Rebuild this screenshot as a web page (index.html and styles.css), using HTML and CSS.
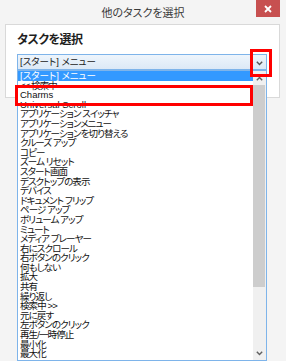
FILE: index.html
```html
<!DOCTYPE html>
<html lang="ja">
<head>
<meta charset="utf-8">
<link rel="stylesheet" href="styles.css">
</head>
<body>
<div class="window">
  <div class="titlebar">
    <span></span>
    <div class="title">他のタスクを選択</div>
    <div class="close">
      <svg width="8" height="8" viewBox="0 0 8 8"><path d="M1 1L7 7M7 1L1 7" stroke="#fff" stroke-width="1.8" fill="none"/></svg>
    </div>
  </div>
  <div class="panel">
    <div class="heading">タスクを選択</div>
    <div class="combo">
      <span class="combo-text">[スタート] メニュー</span>
      <span class="combo-arrow"><svg width="7" height="5" viewBox="0 0 7 5"><path d="M0.8 0.8L3.5 3.6L6.2 0.8" stroke="#555" stroke-width="1.4" fill="none"/></svg></span>
    </div>
  </div>
  <div class="dropdown">
    <ul class="items">
      <li class="selected">[スタート] メニュー</li>
      <li>&lt;&lt; 検索中</li>
      <li class="lat">Charms</li>
      <li class="lat">Universal Scroll</li>
      <li>アプリケーション スイッチャ</li>
      <li>アプリケーションメニュー</li>
      <li>アプリケーションを切り替える</li>
      <li>クルーズ アップ</li>
      <li>コピー</li>
      <li>ズーム リセット</li>
      <li>スタート画面</li>
      <li>デスクトップの表示</li>
      <li>デバイス</li>
      <li>ドキュメント フリップ</li>
      <li>ページ アップ</li>
      <li>ボリューム アップ</li>
      <li>ミュート</li>
      <li>メディア プレーヤー</li>
      <li>右にスクロール</li>
      <li>右ボタンのクリック</li>
      <li>何もしない</li>
      <li>拡大</li>
      <li>共有</li>
      <li>繰り返し</li>
      <li>検索中 &gt;&gt;</li>
      <li>元に戻す</li>
      <li>左ボタンのクリック</li>
      <li>再生/一時停止</li>
      <li>最小化</li>
      <li>最大化</li>
    </ul>
    <div class="scrollbar">
      <div class="sb-btn"><svg width="7" height="5" viewBox="0 0 7 5"><path d="M0.8 4.2L3.5 1.4L6.2 4.2" stroke="#606060" stroke-width="1.4" fill="none"/></svg></div>
      <div class="sb-thumb"></div>
      <div class="sb-track"></div>
      <div class="sb-btn"><svg width="7" height="5" viewBox="0 0 7 5"><path d="M0.8 0.8L3.5 3.6L6.2 0.8" stroke="#606060" stroke-width="1.4" fill="none"/></svg></div>
    </div>
  </div>
  <div class="mark mark-arrow"></div>
  <div class="mark mark-charms"></div>
</div>
</body>
</html>
```
FILE: styles.css
```css
html, body {
  margin: 0;
  padding: 0;
}
body {
  background: #f4f4f4;
  font-family: "Liberation Sans", "Noto Sans CJK JP", sans-serif;
  font-feature-settings: "palt";
}
.window {
  position: relative;
  width: 286px;
  height: 361px;
  overflow: hidden;
  background: #f4f4f4;
}
.titlebar {
  height: 24px;
  display: grid;
  grid-template-columns: 1fr auto 1fr;
  align-items: start;
}
.title {
  font-size: 11px;
  line-height: 14px;
  padding-top: 6px;
  color: #3a3a3a;
  white-space: nowrap;
}
.close {
  justify-self: end;
  margin-right: 6px;
  width: 24px;
  height: 17px;
  background: #c75050;
  display: flex;
  align-items: center;
  justify-content: center;
}
.close svg { display: block; }
.panel {
  margin-left: 5px;
  width: 275px;
  height: 74px;
  box-sizing: border-box;
  border: 1px solid #d9d9d9;
  background: #fff;
  padding: 8px 0 0 11px;
}
.heading {
  font-size: 12px;
  line-height: 14px;
  font-weight: bold;
  letter-spacing: -0.5px;
  color: #1e1e1e;
  white-space: nowrap;
}
.combo {
  margin-top: 7px;
  width: 250px;
  height: 16px;
  box-sizing: border-box;
  border: 1px solid #7eb4ea;
  background: linear-gradient(#eef5fc, #dce9f6);
  display: flex;
  align-items: center;
}
.combo-text {
  flex: 1;
  padding-left: 2px;
  font-size: 9.5px;
  line-height: 14px;
  color: #222;
  white-space: nowrap;
}
.combo-arrow {
  width: 14px;
  display: flex;
  justify-content: center;
  padding-top: 2px;
}
.combo-arrow svg { display: block; }
.dropdown {
  position: absolute;
  left: 17px;
  top: 70px;
  width: 250px;
  height: 291px;
  box-sizing: border-box;
  border: 1px solid #7eb4ea;
  background: #fff;
  display: flex;
}
.items {
  flex: 1;
  list-style: none;
  margin: 0;
  padding: 0;
}
.items li {
  height: 9.6px;
  line-height: 9.6px;
  padding-left: 2px;
  font-size: 9.5px;
  letter-spacing: -0.9px;
  color: #111;
  white-space: nowrap;
}
.items li.lat {
  letter-spacing: 0;
}
.items li.selected {
  background: #3399ff;
  color: #fff;
  letter-spacing: 0;
}
.scrollbar {
  width: 13px;
  display: flex;
  flex-direction: column;
  background: #f0f0f0;
}
.sb-btn {
  height: 14px;
  display: flex;
  align-items: center;
  justify-content: center;
  padding-right: 1px;
}
.sb-btn svg { display: block; }
.sb-thumb {
  height: 202px;
  margin-right: 1px;
  background: #cdcdcd;
}
.sb-track {
  flex: 1;
}
.mark {
  position: absolute;
  box-sizing: border-box;
  border: 3px solid #ff0000;
}
.mark-arrow {
  left: 250px;
  top: 49px;
  width: 22px;
  height: 28px;
}
.mark-charms {
  left: 15px;
  top: 85px;
  width: 238px;
  height: 21px;
}
```
